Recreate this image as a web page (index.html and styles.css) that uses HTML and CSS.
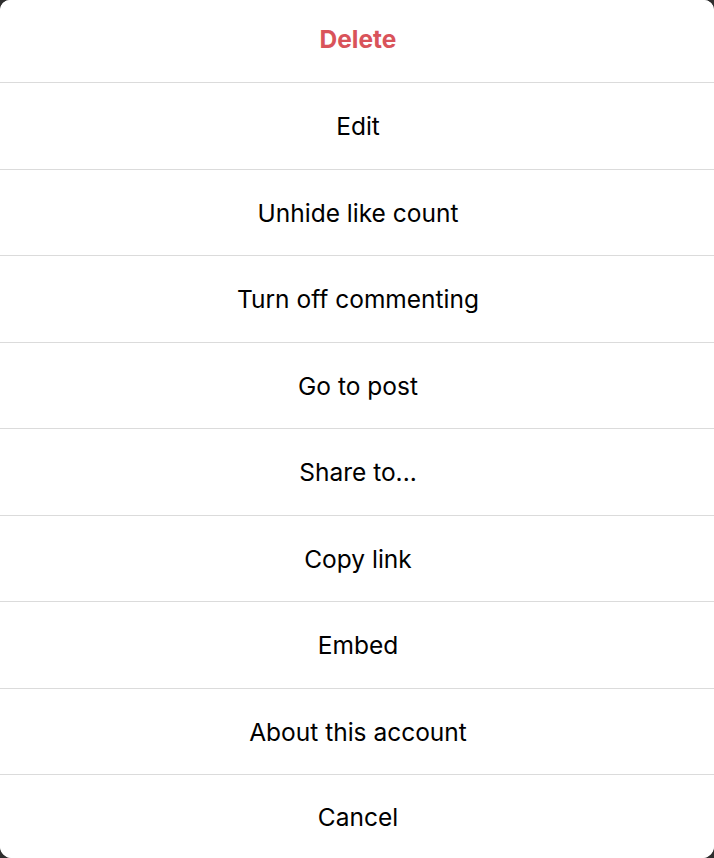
FILE: index.html
```html
<!DOCTYPE html>
<html lang="en">
<head>
<meta charset="utf-8">
<title>Post options</title>
<link rel="stylesheet" href="styles.css">
</head>
<body>
<div class="dialog" role="dialog">
  <button class="item first danger">Delete</button>
  <button class="item">Edit</button>
  <button class="item">Unhide like count</button>
  <button class="item">Turn off commenting</button>
  <button class="item">Go to post</button>
  <button class="item">Share to...</button>
  <button class="item">Copy link</button>
  <button class="item">Embed</button>
  <button class="item">About this account</button>
  <button class="item last">Cancel</button>
</div>
</body>
</html>
```
FILE: styles.css
```css
html, body {
  margin: 0;
  padding: 0;
  height: 100%;
  background: #2e2e2e;
}
body {
  font-family: Inter, "Noto Sans", "Liberation Sans", sans-serif;
}
.dialog {
  display: flex;
  flex-direction: column;
  width: 714px;
  height: 858px;
  background: #ffffff;
  border-radius: 10px 10px 12px 12px;
  overflow: hidden;
}
.item {
  flex: 0 0 86.5px;
  display: flex;
  align-items: center;
  justify-content: center;
  margin: 0;
  padding: 1px 0 0 2px;
  border: 0;
  border-top: 1px solid #dbdbdb;
  background: #ffffff;
  color: #000000;
  font-family: inherit;
  font-size: 24.5px;
  font-weight: 400;
  box-sizing: border-box;
  cursor: pointer;
}
.item.first {
  flex-basis: 82px;
  border-top: 0;
  padding-top: 0;
  padding-bottom: 4px;
}
.item.last {
  flex: 1 1 auto;
  padding-bottom: 0;
}
.danger {
  color: #d9535a;
  font-weight: 700;
}
```
